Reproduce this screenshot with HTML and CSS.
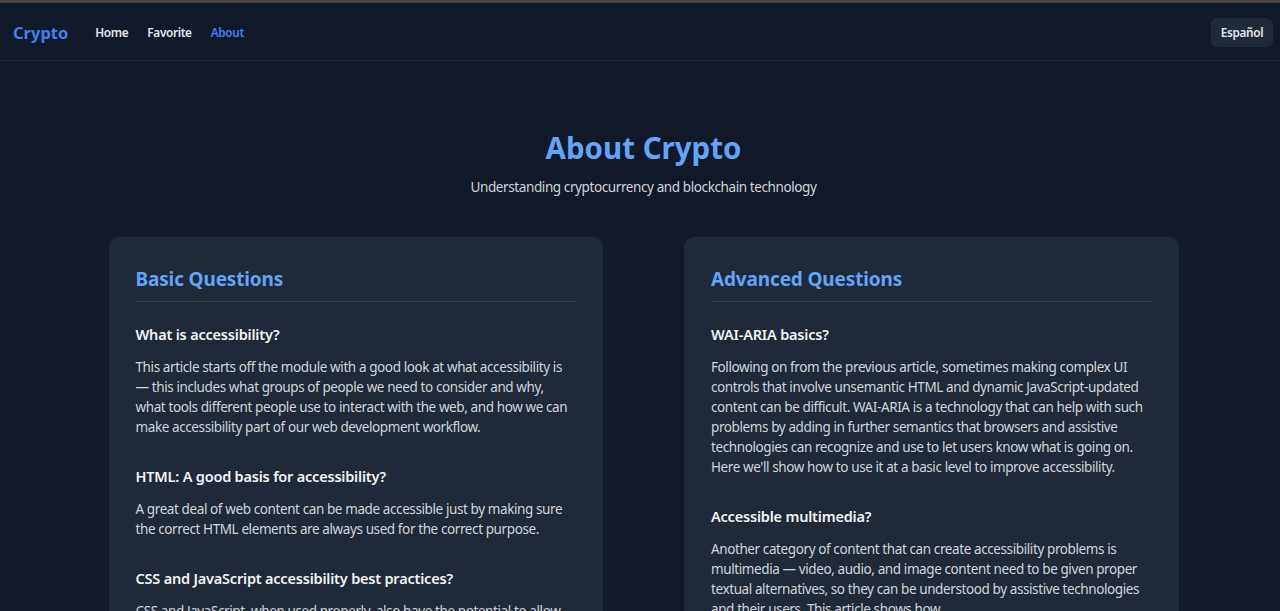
FILE: index.html
```html
<!DOCTYPE html>
<html lang="en">
<head>
<meta charset="utf-8">
<title>About Crypto</title>
<link rel="stylesheet" href="styles.css">
</head>
<body>
<div class="frame-strip"></div>
<header class="navbar">
  <div class="nav-left">
    <a class="logo" href="#">Crypto</a>
    <nav class="nav-links">
      <a href="#">Home</a>
      <a href="#">Favorite</a>
      <a href="#" class="active">About</a>
    </nav>
  </div>
  <button class="lang-btn">Español</button>
</header>
<main class="main">
  <section class="hero">
    <h1>About Crypto</h1>
    <p>Understanding cryptocurrency and blockchain technology</p>
  </section>
  <div class="grid">
    <article class="card">
      <h2>Basic Questions</h2>
      <div class="qa">
        <h3>What is accessibility?</h3>
        <p>This article starts off the module with a good look at what accessibility is — this includes what groups of people we need to consider and why, what tools different people use to interact with the web, and how we can make accessibility part of our web development workflow.</p>
      </div>
      <div class="qa">
        <h3>HTML: A good basis for accessibility?</h3>
        <p>A great deal of web content can be made accessible just by making sure the correct HTML elements are always used for the correct purpose.</p>
      </div>
      <div class="qa">
        <h3>CSS and JavaScript accessibility best practices?</h3>
        <p>CSS and JavaScript, when used properly, also have the potential to allow for accessible web experiences, but if misused they can significantly harm accessibility. This article outlines some CSS and JavaScript best practices that should be considered to ensure that even complex content is as accessible as possible.</p>
      </div>
    </article>
    <article class="card">
      <h2>Advanced Questions</h2>
      <div class="qa">
        <h3>WAI-ARIA basics?</h3>
        <p>Following on from the previous article, sometimes making complex UI controls that involve unsemantic HTML and dynamic JavaScript-updated content can be difficult. WAI-ARIA is a technology that can help with such problems by adding in further semantics that browsers and assistive technologies can recognize and use to let users know what is going on. Here we'll show how to use it at a basic level to improve accessibility.</p>
      </div>
      <div class="qa">
        <h3>Accessible multimedia?</h3>
        <p>Another category of content that can create accessibility problems is multimedia — video, audio, and image content need to be given proper textual alternatives, so they can be understood by assistive technologies and their users. This article shows how.</p>
      </div>
    </article>
  </div>
</main>
</body>
</html>
```

FILE: styles.css
```css
* { box-sizing: border-box; }
html, body {
  margin: 0;
  padding: 0;
  background: #111827;
  color: #d1d5db;
  font-family: "Noto Sans", "Open Sans", sans-serif;
}
.frame-strip {
  height: 3px;
  background: #4a453f;
}
.navbar {
  height: 58px;
  display: flex;
  align-items: center;
  justify-content: space-between;
  padding: 1px 7px 0 13px;
  border-bottom: 1px solid #1f2937;
}
.nav-left {
  display: flex;
  align-items: center;
  gap: 27px;
}
.logo {
  color: #3b82f6;
  font-weight: 700;
  font-size: 16.5px;
  text-decoration: none;
}
.nav-links {
  display: flex;
  gap: 19px;
}
.nav-links a {
  color: #e5e7eb;
  font-size: 11.8px;
  font-weight: 600;
  letter-spacing: -0.35px;
  text-decoration: none;
}
.nav-links a.active { color: #3b82f6; }
.lang-btn {
  background: #1f2937;
  color: #e5e7eb;
  border: none;
  border-radius: 6px;
  font-family: inherit;
  font-size: 11.8px;
  font-weight: 600;
  letter-spacing: -0.3px;
  width: 62px;
  height: 29px;
  padding: 0;
}
.main {
  padding: 0 0 40px 7px;
}
.hero {
  text-align: center;
  padding-top: 67px;
}
.hero h1 {
  margin: 0;
  color: #60a5fa;
  font-size: 29.5px;
  font-weight: 700;
  line-height: 40px;
}
.hero p {
  margin: 10px 0 0;
  font-size: 13.5px;
  letter-spacing: -0.4px;
  color: #d1d5db;
}
.grid {
  display: grid;
  grid-template-columns: 1fr 1fr;
  gap: 81px;
  max-width: 1070px;
  margin: 41px auto 0;
}
.card {
  background: #1f2937;
  border-radius: 10px;
  padding: 28px 27px 30px;
}
.card h2 {
  margin: 0;
  color: #60a5fa;
  font-size: 19px;
  font-weight: 700;
  letter-spacing: -0.15px;
  line-height: 28px;
  padding-bottom: 8px;
  border-bottom: 1px solid #374151;
}
.qa { margin-top: 21px; }
.qa + .qa { margin-top: 28px; }
.qa h3 {
  margin: 0;
  color: #f3f4f6;
  font-size: 14.5px;
  font-weight: 600;
  letter-spacing: -0.2px;
  line-height: 22px;
}
.qa p {
  margin: 12px 0 0;
  font-size: 13.5px;
  letter-spacing: -0.4px;
  line-height: 20px;
  color: #d1d5db;
}
```
